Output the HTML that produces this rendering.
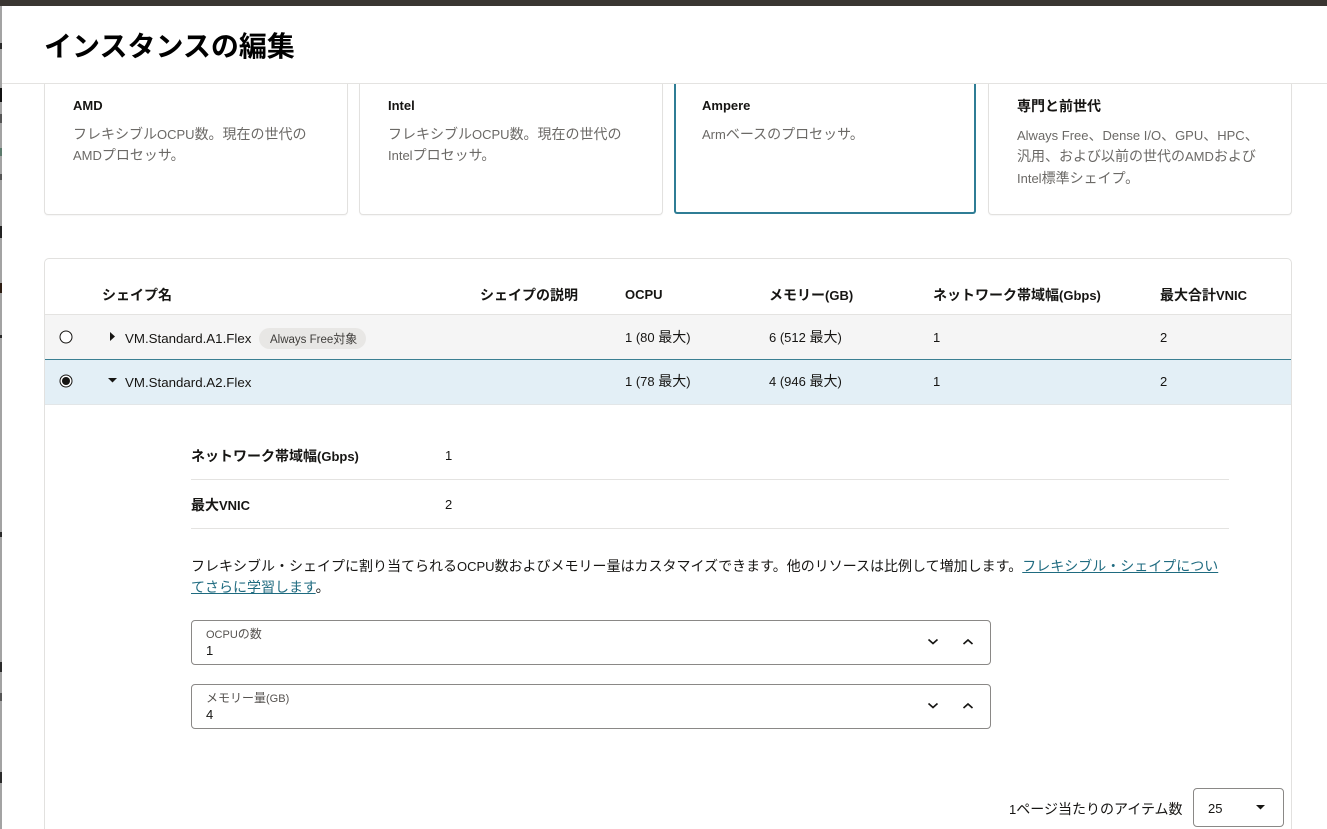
<!DOCTYPE html>
<html lang="ja">
<head>
<meta charset="utf-8">
<style>
html,body{margin:0;padding:0;width:1327px;height:829px;overflow:hidden;background:#fff}
body{position:relative;font-family:"Liberation Sans","Noto Sans CJK JP",sans-serif;color:#161513;font-size:14px}
.t{position:absolute;white-space:nowrap;line-height:20px}
.l{font-size:13px}
.x{font-size:11px}
.b{font-weight:700}
.box{position:absolute;box-sizing:border-box}
.card{border:1px solid #e2e1df;border-top:0;border-radius:0 0 4px 4px;top:84px;height:131px;background:#fff;box-shadow:0 1px 1px rgba(0,0,0,.04)}
.g{color:#6b6966}
.sm{font-size:12px}
.f{position:absolute;left:0;width:2px;background:#2a2a2a}
a{color:#1f6b80;text-decoration:underline}
svg{position:absolute;overflow:visible}
</style>
</head>
<body>
<div class="box" style="left:0;top:0;width:1327px;height:6px;background:#3a3632"></div>
<div class="box" style="left:0;top:6px;width:2px;height:823px;background:#a3a3a3"></div>
<div class="f" style="top:43px;height:6px"></div>
<div class="f" style="top:88px;height:14px;background:#111"></div>
<div class="f" style="top:114px;height:9px;background:#555"></div>
<div class="f" style="top:148px;height:8px;background:#5c7a6c"></div>
<div class="f" style="top:174px;height:6px;background:#555"></div>
<div class="f" style="top:226px;height:12px;background:#222"></div>
<div class="f" style="top:283px;height:10px;background:#2c1c12"></div>
<div class="f" style="top:335px;height:3px"></div>
<div class="f" style="top:532px;height:5px"></div>
<div class="f" style="top:662px;height:10px"></div>
<div class="f" style="top:693px;height:8px;background:#555"></div>
<div class="f" style="top:772px;height:11px"></div>

<div class="t b" style="left:44px;top:27px;font-size:28px;line-height:40px;color:#000">インスタンスの編集</div>
<div class="box" style="left:2px;top:83px;width:1325px;height:1px;background:#e4e3e1"></div>

<div class="box card" style="left:44px;width:304px"></div>
<div class="box card" style="left:359px;width:304px"></div>
<div class="box" style="left:674px;top:84px;width:302px;height:130px;border:2px solid #2f7d95;border-top:0;border-radius:0 0 3px 3px"></div>
<div class="box card" style="left:988px;width:304px"></div>

<div class="t b l" style="left:73px;top:96px">AMD</div>
<div class="t g" style="left:73px;top:124px">フレキシブル<span class="l">OCPU</span>数。現在の世代の</div>
<div class="t g" style="left:73px;top:145px"><span class="l">AMD</span>プロセッサ。</div>
<div class="t b l" style="left:388px;top:96px">Intel</div>
<div class="t g" style="left:388px;top:124px">フレキシブル<span class="l">OCPU</span>数。現在の世代の</div>
<div class="t g" style="left:388px;top:145px"><span class="l">Intel</span>プロセッサ。</div>
<div class="t b l" style="left:702px;top:96px">Ampere</div>
<div class="t g" style="left:702px;top:124px"><span class="l">Arm</span>ベースのプロセッサ。</div>
<div class="t b" style="left:1017px;top:96px">専門と前世代</div>
<div class="t g" style="left:1017px;top:125px"><span class="l">Always Free</span>、<span class="l">Dense I/O</span>、<span class="l">GPU</span>、<span class="l">HPC</span>、</div>
<div class="t g" style="left:1017px;top:146px">汎用、および以前の世代の<span class="l">AMD</span>および</div>
<div class="t g" style="left:1017px;top:168px"><span class="l">Intel</span>標準シェイプ。</div>

<div class="box" style="left:44px;top:258px;width:1248px;height:600px;border:1px solid #e2e1df;border-radius:5px"></div>
<div class="t b" style="left:102px;top:285px">シェイプ名</div>
<div class="t b" style="left:480px;top:285px">シェイプの説明</div>
<div class="t b l" style="left:625px;top:285px">OCPU</div>
<div class="t b" style="left:769px;top:285px">メモリー<span class="l">(GB)</span></div>
<div class="t b" style="left:933px;top:285px">ネットワーク帯域幅<span class="l">(Gbps)</span></div>
<div class="t b" style="left:1160px;top:285px">最大合計<span class="l">VNIC</span></div>

<div class="box" style="left:45px;top:314px;width:1246px;height:46px;background:#f5f5f5;border-top:1px solid #e4e3e1"></div>
<div class="box" style="left:45px;top:359px;width:1246px;height:46px;background:#e3eff6;border-top:1px solid #3b7f92;border-bottom:1px solid #e2e6e8"></div>

<svg style="left:59px;top:330px" width="14" height="14"><circle cx="7" cy="7" r="6" fill="#fff" stroke="#161513" stroke-width="1"/></svg>
<svg style="left:59px;top:374px" width="14" height="14"><circle cx="7" cy="7" r="6" fill="#fff" stroke="#161513" stroke-width="1"/><circle cx="7" cy="7" r="4" fill="#161513"/></svg>
<svg style="left:109px;top:331px" width="8" height="12"><path d="M1 1L6 5.500L1 10Z" fill="#161513"/></svg>
<svg style="left:107px;top:377px" width="12" height="8"><path d="M1 1H10L5.500 5.500Z" fill="#161513"/></svg>

<div class="t" style="left:125px;top:329px;font-size:13.300px">VM.Standard.A1.Flex</div>
<div class="box" style="left:259px;top:328px;width:107px;height:21px;border-radius:11px;background:#e8e7e5"></div>
<div class="t sm" style="left:270px;top:329px;color:#3f3d3a"><span style="font-size:11.500px">Always Free</span>対象</div>
<div class="t" style="left:625px;top:327px"><span class="l">1 (80 </span>最大<span class="l">)</span></div>
<div class="t" style="left:769px;top:327px"><span class="l">6 (512 </span>最大<span class="l">)</span></div>
<div class="t l" style="left:933px;top:328px">1</div>
<div class="t l" style="left:1160px;top:328px">2</div>

<div class="t" style="left:125px;top:373px;font-size:13.300px">VM.Standard.A2.Flex</div>
<div class="t" style="left:625px;top:371px"><span class="l">1 (78 </span>最大<span class="l">)</span></div>
<div class="t" style="left:769px;top:371px"><span class="l">4 (946 </span>最大<span class="l">)</span></div>
<div class="t l" style="left:933px;top:372px">1</div>
<div class="t l" style="left:1160px;top:372px">2</div>

<div class="t b" style="left:191px;top:446px">ネットワーク帯域幅<span class="l">(Gbps)</span></div>
<div class="t l" style="left:445px;top:446px">1</div>
<div class="box" style="left:191px;top:479px;width:1038px;height:1px;background:#e4e3e1"></div>
<div class="t b" style="left:191px;top:495px">最大<span class="l">VNIC</span></div>
<div class="t l" style="left:445px;top:495px">2</div>
<div class="box" style="left:191px;top:528px;width:1038px;height:1px;background:#e4e3e1"></div>

<div class="t" style="left:191px;top:556px">フレキシブル・シェイプに割り当てられる<span class="l">OCPU</span>数およびメモリー量はカスタマイズできます。他のリソースは比例して増加します。<a>フレキシブル・シェイプについ</a></div>
<div class="t" style="left:191px;top:577px"><a>てさらに学習します</a>。</div>

<div class="box" style="left:191px;top:620px;width:800px;height:45px;border:1px solid #8a8886;border-radius:4px"></div>
<div class="t sm" style="left:206px;top:625px;color:#55524f;line-height:18px"><span class="x">OCPU</span>の数</div>
<div class="t l" style="left:206px;top:641px">1</div>
<svg style="left:927px;top:638px" width="12" height="8"><path d="M1.500 1.500L6 5.500L10.500 1.500" fill="none" stroke="#161513" stroke-width="1.600"/></svg>
<svg style="left:962px;top:638px" width="12" height="8"><path d="M1.500 6L6 2L10.500 6" fill="none" stroke="#161513" stroke-width="1.600"/></svg>

<div class="box" style="left:191px;top:684px;width:800px;height:45px;border:1px solid #8a8886;border-radius:4px"></div>
<div class="t sm" style="left:206px;top:689px;color:#55524f;line-height:18px">メモリー量<span class="x">(GB)</span></div>
<div class="t l" style="left:206px;top:705px">4</div>
<svg style="left:927px;top:702px" width="12" height="8"><path d="M1.500 1.500L6 5.500L10.500 1.500" fill="none" stroke="#161513" stroke-width="1.600"/></svg>
<svg style="left:962px;top:702px" width="12" height="8"><path d="M1.500 6L6 2L10.500 6" fill="none" stroke="#161513" stroke-width="1.600"/></svg>

<div class="t" style="left:1009px;top:799px"><span class="l">1</span>ページ当たりのアイテム数</div>
<div class="box" style="left:1193px;top:788px;width:91px;height:39px;border:1px solid #8a8886;border-radius:4px"></div>
<div class="t l" style="left:1208px;top:799px">25</div>
<svg style="left:1255px;top:804px" width="12" height="7"><path d="M1 1H10L5.500 5.500Z" fill="#161513"/></svg>
</body>
</html>
